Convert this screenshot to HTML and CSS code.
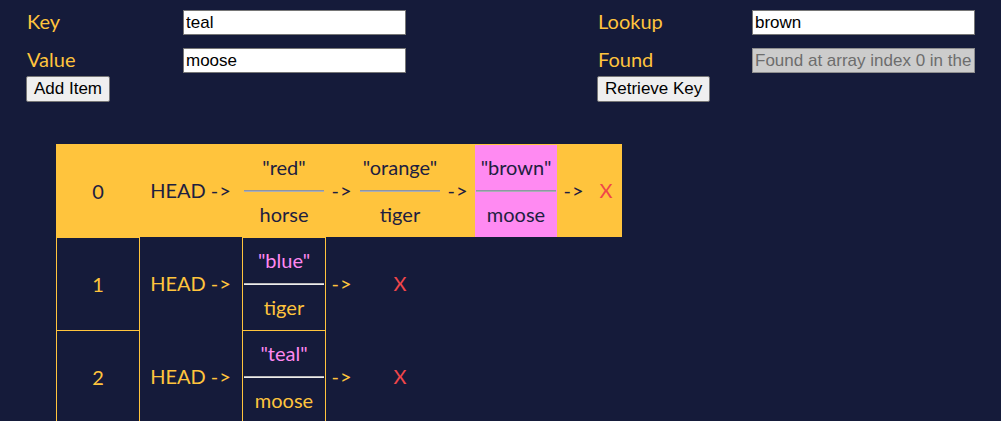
FILE: index.html
```html
<!DOCTYPE html>
<html>
<head>
<meta charset="utf-8">
<link rel="stylesheet" href="styles.css">
</head>
<body>
<div class="top">
  <div class="form">
    <div class="field field-left">
      <label class="label">Key</label>
      <input class="input" type="text" value="teal">
    </div>
    <div class="field field-left">
      <label class="label">Value</label>
      <input class="input" type="text" value="moose">
    </div>
    <button class="btn">Add Item</button>
  </div>
  <div class="form">
    <div class="field field-right">
      <label class="label">Lookup</label>
      <input class="input" type="text" value="brown">
    </div>
    <div class="field field-right">
      <label class="label">Found</label>
      <input class="input input-disabled" type="text" value="Found at array index 0 in the linked list" disabled>
    </div>
    <button class="btn">Retrieve Key</button>
  </div>
</div>

<div class="table">
  <div class="row row-active">
    <div class="cell idx">0</div>
    <div class="cell head"><span>HEAD <span class="arr">-&gt;</span></span></div>
    <div class="node"><div class="key">"red"</div><div class="rule"></div><div class="val">horse</div></div>
    <div class="cell arrow"><span class="arr">-&gt;</span></div>
    <div class="node"><div class="key">"orange"</div><div class="rule"></div><div class="val">tiger</div></div>
    <div class="cell arrow"><span class="arr">-&gt;</span></div>
    <div class="node node-found"><div class="key">"brown"</div><div class="rule"></div><div class="val">moose</div></div>
    <div class="cell arrow"><span class="arr">-&gt;</span></div>
    <div class="cell end">X</div>
  </div>
  <div class="row">
    <div class="cell idx">1</div>
    <div class="cell head"><span>HEAD <span class="arr">-&gt;</span></span></div>
    <div class="node"><div class="key">"blue"</div><div class="rule"></div><div class="val">tiger</div></div>
    <div class="cell arrow"><span class="arr">-&gt;</span></div>
    <div class="cell end">X</div>
  </div>
  <div class="row">
    <div class="cell idx">2</div>
    <div class="cell head"><span>HEAD <span class="arr">-&gt;</span></span></div>
    <div class="node"><div class="key">"teal"</div><div class="rule"></div><div class="val">moose</div></div>
    <div class="cell arrow"><span class="arr">-&gt;</span></div>
    <div class="cell end">X</div>
  </div>
</div>
</body>
</html>
```

FILE: styles.css
```css
html, body {
  margin: 0;
  padding: 0;
  background: #151b3a;
  overflow: hidden;
}

body {
  font-family: Lato, "Noto Sans", sans-serif;
  color: #ffc43d;
}

.top {
  display: flex;
  justify-content: space-between;
  padding: 10px 26px 0 26px;
}

.form {
  display: flex;
  flex-direction: column;
  align-items: flex-start;
}

.field {
  display: grid;
  align-items: center;
  margin-bottom: 13px;
}

.field + .field {
  margin-bottom: 3px;
}

.field-left {
  grid-template-columns: 157px 223px;
}

.field-right {
  grid-template-columns: 155px 223px;
}

.label {
  font-size: 20px;
  line-height: 20px;
  padding: 0 0 4px 1px;
  color: #ffc43d;
}

.input {
  box-sizing: border-box;
  width: 223px;
  height: 25px;
  margin: 0;
  padding: 0 2px;
  border: 1px solid #767676;
  background: #ffffff;
  color: #000000;
  font-family: "Liberation Sans", Arial, sans-serif;
  font-size: 17px;
}

.input-disabled {
  background: #cccccc;
  color: #6d6d6d;
  border-color: #8e8e8e;
}

.btn {
  box-sizing: border-box;
  height: 26px;
  margin: 0;
  padding: 0 7px;
  border: 1px solid #767676;
  border-radius: 2px;
  background: #efefef;
  color: #000000;
  font-family: "Liberation Sans", Arial, sans-serif;
  font-size: 17px;
}

.table {
  margin: 42px 0 0 56px;
  display: flex;
  flex-direction: column;
  align-items: flex-start;
}

.row {
  display: grid;
  grid-template-columns: 84px 102px 84px 32px 84px 32px 84px 32px 32px;
  height: 93px;
  font-size: 20px;
}

.row-active {
  width: 566px;
  background: #ffc43d;
  color: #1d2040;
}

.cell {
  display: flex;
  align-items: center;
  justify-content: center;
  box-sizing: border-box;
  padding-bottom: 1px;
}

.arr {
  letter-spacing: 1px;
}

.idx {
  border: 1px solid #ffc43d;
  border-bottom: none;
}

.head {
  white-space: nowrap;
}

.node {
  box-sizing: border-box;
  border: 1px solid #ffc43d;
  border-bottom: none;
  display: flex;
  flex-direction: column;
}

.key, .val {
  height: 45px;
  display: flex;
  align-items: center;
  justify-content: center;
  padding-bottom: 1px;
  box-sizing: border-box;
}

.key {
  color: #ff88f0;
}

.rule {
  height: 0;
  margin: 0 1px;
  border-top: 1px solid #b9b9b9;
  border-bottom: 1px solid #ededed;
}

.row-active .key {
  color: #1d2040;
}

.row-active .rule {
  border-top-color: #8f95a3;
  border-bottom-color: #a9adb6;
}

.node-found {
  background: #ff8af2;
}

.end {
  color: #f0464a;
}
```
